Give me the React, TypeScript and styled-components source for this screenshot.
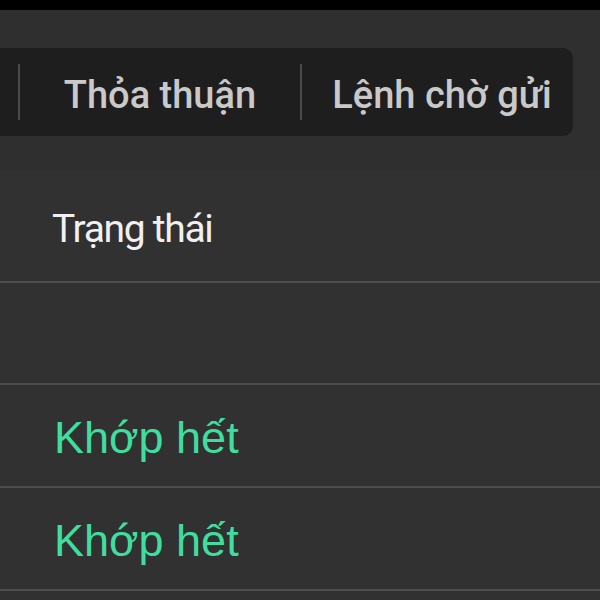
import React from "react";
import styled, { createGlobalStyle } from "styled-components";

const Global = createGlobalStyle`
  html, body { margin: 0; padding: 0; background: #303030; }
  body { width: 600px; height: 600px; overflow: hidden; font-family: Roboto, "Noto Sans", sans-serif; }
`;

const Screen = styled.div`
  width: 600px;
  height: 600px;
  background: #313131;
  display: flex;
  flex-direction: column;
  overflow: hidden;
`;

const StatusBar = styled.div`
  height: 10px;
  background: #000;
  flex: none;
`;

const Toolbar = styled.div`
  height: 160px;
  box-sizing: border-box;
  padding: 38px 0 0 0;
  background: #2f2f2f;
  flex: none;
`;

const TabPill = styled.div`
  display: flex;
  align-items: center;
  height: 88px;
  width: 835px;
  margin-left: -262px;
  background: #1e1e1e;
  border-radius: 10px;
`;

const Tab = styled.div`
  width: 280px;
  height: 100%;
  flex: none;
  display: flex;
  justify-content: center;
  align-items: center;
  box-sizing: border-box;
  padding-top: 5px;
  font-family: Roboto, sans-serif;
  font-weight: 500;
  font-size: 38px;
  color: #c9c9c9;
`;

const Divider = styled.div`
  width: 2px;
  height: 56px;
  background: #4b4b4b;
  flex: none;
`;

const Table = styled.div`
  display: flex;
  flex-direction: column;
`;

const Row = styled.div<{ $h: number; $top: number }>`
  height: ${(p) => p.$h}px;
  box-sizing: border-box;
  border-bottom: 2px solid #4d4d4d;
  display: flex;
  align-items: flex-start;
  padding: ${(p) => p.$top}px 0 0 52px;
`;

const HeaderCell = styled.span`
  font-family: Roboto, sans-serif;
  font-size: 39px;
  line-height: 46px;
  letter-spacing: -1.3px;
  color: #f0f0f0;
`;

const StatusCell = styled.span`
  font-family: "Liberation Sans", Arial, sans-serif;
  font-size: 45px;
  line-height: 52px;
  color: #40de9e;
  margin-left: 2px;
`;

export default function App() {
  return (
    <>
      <Global />
      <Screen>
        <StatusBar />
        <Toolbar>
          <TabPill>
            <Tab />
            <Divider />
            <Tab>Thỏa thuận</Tab>
            <Divider />
            <Tab>Lệnh chờ gửi</Tab>
          </TabPill>
        </Toolbar>
        <Table>
          <Row $h={113} $top={36}>
            <HeaderCell>Trạng thái</HeaderCell>
          </Row>
          <Row $h={102} $top={0} />
          <Row $h={103} $top={27}>
            <StatusCell>Khớp hết</StatusCell>
          </Row>
          <Row $h={103} $top={27}>
            <StatusCell>Khớp hết</StatusCell>
          </Row>
        </Table>
      </Screen>
    </>
  );
}
